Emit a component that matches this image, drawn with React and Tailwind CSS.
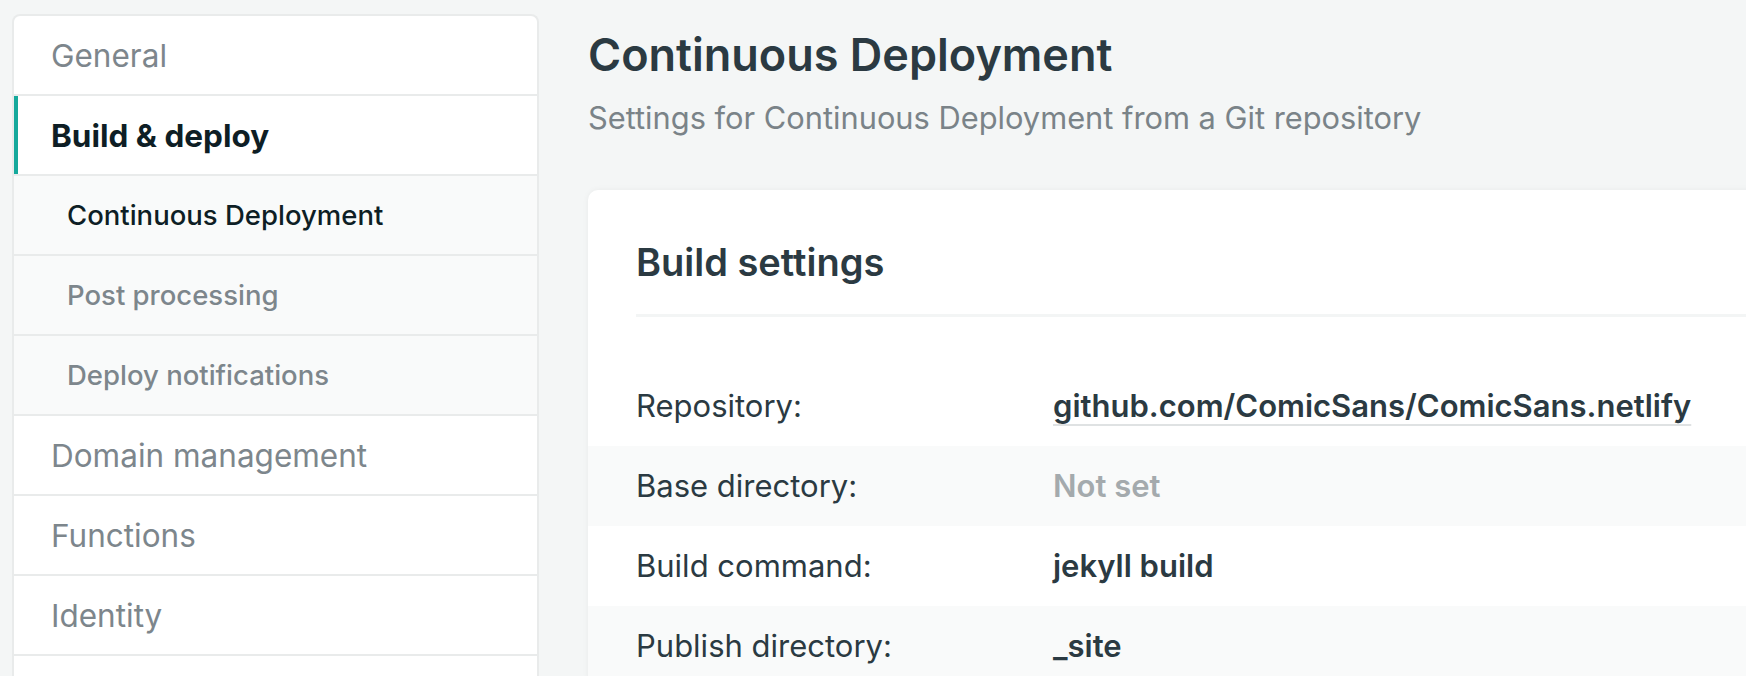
import React from 'react';

const navItems = [
  { label: 'General' },
  { label: 'Build & deploy', active: true },
  { label: 'Continuous Deployment', sub: true, active: true },
  { label: 'Post processing', sub: true },
  { label: 'Deploy notifications', sub: true },
  { label: 'Domain management' },
  { label: 'Functions' },
  { label: 'Identity' },
  { label: '' },
];

const buildRows = [
  { label: 'Repository:', value: 'github.com/ComicSans/ComicSans.netlify', link: true },
  { label: 'Base directory:', value: 'Not set', muted: true },
  { label: 'Build command:', value: 'jekyll build' },
  { label: 'Publish directory:', value: '_site' },
];

const NavItem = ({ item }) => {
  if (item.sub) {
    return (
      <div className="h-[80px] flex items-center pl-[53px] pt-[2px] bg-[#f9fafa] border-b-2 border-[#e9ebeb]">
        <span className={`text-[27.5px] font-medium ${item.active ? 'text-[#0e1e25]' : 'text-[#7d868c]'}`}>
          {item.label}
        </span>
      </div>
    );
  }
  return (
    <div className="relative h-[80px] flex items-center pl-[37px] pt-[2px] border-b-2 border-[#e9ebeb]">
      {item.active && <div className="absolute left-0 top-0 bottom-0 w-[4px] bg-[#15a99c]" />}
      <span className={`text-[31.5px] ${item.active ? 'font-bold text-[#0e1e25]' : 'text-[#7d868c]'}`}>
        {item.label}
      </span>
    </div>
  );
};

export default function App() {
  return (
    <div className="min-h-screen h-[676px] bg-[#f4f6f6] flex items-start gap-[49px] pl-3 overflow-hidden font-['Inter','Noto_Sans',sans-serif]">
      <nav className="mt-[14px] w-[527px] shrink-0 bg-white border-2 border-b-0 border-[#e9ebeb] rounded-t-lg overflow-hidden">
        {navItems.map((item, i) => (
          <NavItem key={i} item={item} />
        ))}
      </nav>

      <main className="min-w-0 flex-1 pt-[32px]">
        <h1 className="text-[45px] leading-none font-semibold text-[#2b3a42]">Continuous Deployment</h1>
        <p className="mt-[26px] text-[30.8px] leading-none text-[#7a8388]">
          Settings for Continuous Deployment from a Git repository
        </p>

        <section className="mt-[56px] w-[1300px] bg-white rounded-[10px] shadow-[0_0_6px_rgba(0,0,0,0.05)]">
          <div className="pt-[53px] pl-[48px]">
            <h2 className="text-[38px] leading-none font-semibold text-[#2b3a42]">Build settings</h2>
            <div className="mt-[33px] h-[3px] bg-[#f3f5f5]" />
          </div>

          <div className="mt-[49px]">
            {buildRows.map((row, i) => (
              <div
                key={row.label}
                className={`h-[80px] flex items-center pl-[48px] ${i % 2 === 1 ? 'bg-[#f9fafa]' : ''}`}
              >
                <div className="w-[417px] shrink-0 text-[31px] text-[#2b3a42]">{row.label}</div>
                <div
                  className={`text-[31px] font-semibold ${
                    row.muted ? 'text-[#a4aaad]' : 'text-[#2b3a42]'
                  } ${row.link ? 'underline decoration-2 decoration-[#dfe2e3] underline-offset-[7px]' : ''}`}
                >
                  {row.value}
                </div>
              </div>
            ))}
          </div>
        </section>
      </main>
    </div>
  );
}
